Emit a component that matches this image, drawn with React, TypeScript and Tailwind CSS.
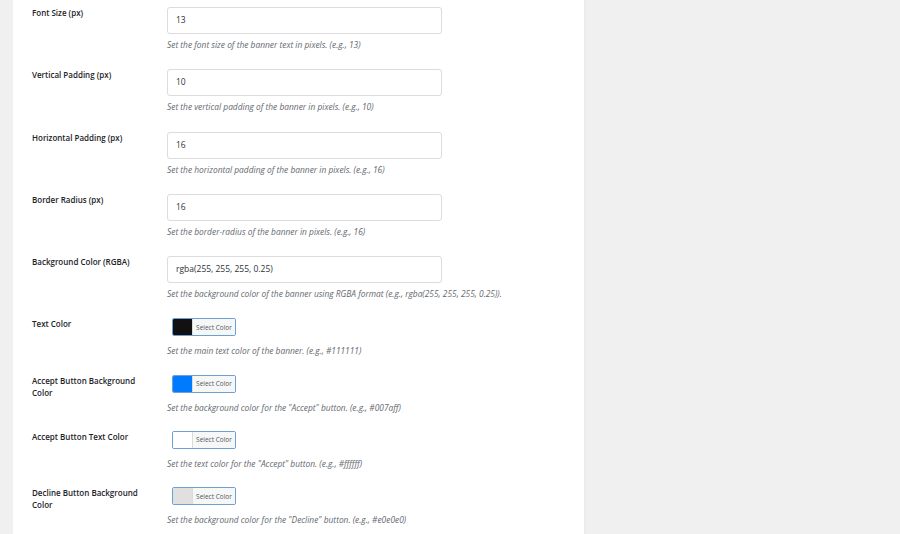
const textRows = [
  { label: 'Font Size (px)', value: '13', desc: 'Set the font size of the banner text in pixels. (e.g., 13)' },
  { label: 'Vertical Padding (px)', value: '10', desc: 'Set the vertical padding of the banner in pixels. (e.g., 10)' },
  { label: 'Horizontal Padding (px)', value: '16', desc: 'Set the horizontal padding of the banner in pixels. (e.g., 16)' },
  { label: 'Border Radius (px)', value: '16', desc: 'Set the border-radius of the banner in pixels. (e.g., 16)' },
  {
    label: 'Background Color (RGBA)',
    value: 'rgba(255, 255, 255, 0.25)',
    desc: 'Set the background color of the banner using RGBA format (e.g., rgba(255, 255, 255, 0.25)).'
  }
]

const colorRows = [
  { label: 'Text Color', color: '#111111', desc: 'Set the main text color of the banner. (e.g., #111111)' },
  { label: 'Accept Button Background Color', color: '#007aff', desc: 'Set the background color for the "Accept" button. (e.g., #007aff)' },
  { label: 'Accept Button Text Color', color: '#ffffff', desc: 'Set the text color for the "Accept" button. (e.g., #ffffff)' },
  { label: 'Decline Button Background Color', color: '#e0e0e0', desc: 'Set the background color for the "Decline" button. (e.g., #e0e0e0)' }
]

function Label({ children }: { children: React.ReactNode }) {
  return (
    <div className="w-[135px] shrink-0 pr-[12px] text-[8px] leading-[12px] font-semibold text-[#1d2327]">
      {children}
    </div>
  )
}

function Desc({ children }: { children: React.ReactNode }) {
  return <p className="text-[8.4px] leading-[11px] italic text-[#646970] whitespace-nowrap">{children}</p>
}

export default function App() {
  return (
    <div
      className="w-[900px] h-[534px] overflow-hidden bg-[#f0f0f1] flex"
      style={{ fontFamily: '"Open Sans", "Noto Sans", sans-serif' }}
    >
      <div className="ml-[13px] w-[571px] h-full bg-white pl-[19px] pt-[7px] shadow-[1px_0_2px_rgba(0,0,0,0.04)]">
        {textRows.map((row) => (
          <div key={row.label} className="flex pb-[19.3px]">
            <Label>{row.label}</Label>
            <div>
              <div className="w-[275px] h-[27px] flex items-center px-[8px] border border-[#dcdcde] rounded-[3px] text-[8.5px] text-[#2c3338]">
                {row.value}
              </div>
              <div className="mt-[5px]">
                <Desc>{row.desc}</Desc>
              </div>
            </div>
          </div>
        ))}
        {colorRows.map((row) => (
          <div key={row.label} className="flex pb-[18.3px]">
            <Label>{row.label}</Label>
            <div>
              <div className="ml-[5px] w-[64px] h-[18px] flex border border-[#6e9fd4] rounded-[2px] overflow-hidden">
                <div className="w-[19px] h-full" style={{ backgroundColor: row.color }} />
                <div className="flex-1 flex items-center justify-center bg-[#f6f7f7] border-l border-[#dcdcde] text-[6.5px] text-[#50575e]">
                  Select Color
                </div>
              </div>
              <div className="mt-[9px]">
                <Desc>{row.desc}</Desc>
              </div>
            </div>
          </div>
        ))}
      </div>
    </div>
  )
}
